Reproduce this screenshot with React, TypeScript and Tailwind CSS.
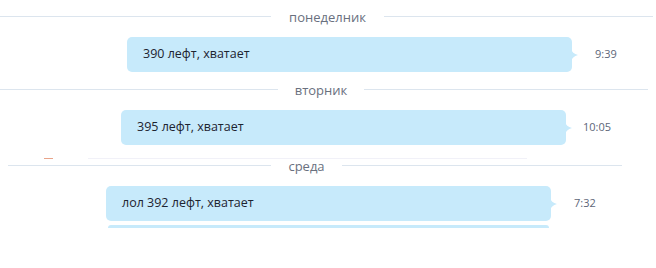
import React from "react";

const FONT = { fontFamily: '"Open Sans", "Noto Sans", sans-serif' };

function Tail() {
  return (
    <svg
      width="7"
      height="13"
      viewBox="0 0 7 13"
      className="absolute right-[-6px] top-1/2 -translate-y-1/2"
    >
      <path d="M0 0 Q1 5 7 6.5 Q1 8 0 13 Z" fill="#c7eafb" />
    </svg>
  );
}

function Bubble({ text }: { text: string }) {
  return (
    <div className="relative flex h-[35px] w-[445px] items-center rounded-[5px] bg-[#c7eafb] pl-4 text-[12.5px] text-[#1d2430]">
      {text}
      <Tail />
    </div>
  );
}

function Divider({
  label,
  left,
  gap,
  right,
}: {
  label: string;
  left: number;
  gap: number;
  right: number;
}) {
  return (
    <div className="flex h-[17px] items-center">
      <div className="h-px bg-[#dce5ee]" style={{ width: left }} />
      <div
        className="pt-[2px] text-center text-[13px] leading-none text-[#69707e]"
        style={{ width: gap }}
      >
        {label}
      </div>
      <div className="h-px bg-[#dce5ee]" style={{ width: right }} />
    </div>
  );
}

export default function App() {
  return (
    <div className="h-[268px] w-[656px] overflow-hidden bg-white" style={FONT}>
      {/* monday */}
      <div className="pt-[8px]">
        <Divider label="понеделник" left={271} gap={113} right={269} />
      </div>
      <div className="mt-[12px] flex items-center">
        <div className="ml-[127px]">
          <Bubble text="390 лефт, хватает" />
        </div>
        <span className="ml-[23px] text-[11px] text-[#5d6678]">9:39</span>
      </div>

      {/* tuesday */}
      <div className="mt-[9px]">
        <Divider label="вторник" left={278} gap={86} right={284} />
      </div>
      <div className="mt-[12px] flex items-center">
        <div className="ml-[121px]">
          <Bubble text="395 лефт, хватает" />
        </div>
        <span className="ml-[17px] text-[11px] text-[#5d6678]">10:05</span>
      </div>

      {/* wednesday */}
      <div className="mt-[12px] flex h-[2px] items-center">
        <div className="ml-[44px] h-px w-[9px] bg-[#e9a48a]" />
        <div className="ml-[35px] h-px w-[439px] bg-[#f1f1f8]" />
      </div>
      <div className="mt-[-2px] pl-[8px]">
        <Divider label="среда" left={263} gap={71} right={280} />
      </div>
      <div className="mt-[12px] flex items-center">
        <div className="ml-[106px]">
          <Bubble text="лол 392 лефт, хватает" />
        </div>
        <span className="ml-[23px] text-[11px] text-[#5d6678]">7:32</span>
      </div>
      <div className="ml-[108px] mt-[4px] h-[3px] w-[441px] rounded-t-[3px] bg-[#c7eafb]" />
    </div>
  );
}
